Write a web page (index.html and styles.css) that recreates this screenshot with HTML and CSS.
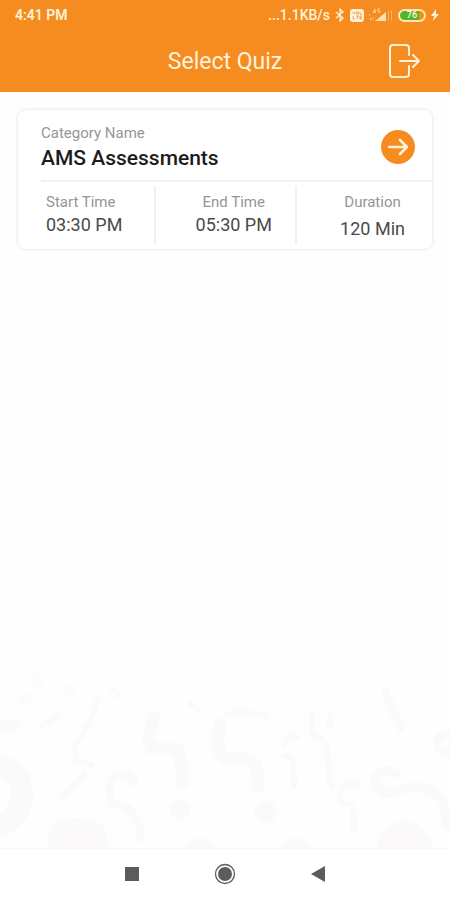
FILE: index.html
```html
<!DOCTYPE html>
<html lang="en">
<head>
    <meta charset="UTF-8">
    <meta name="viewport" content="width=device-width, initial-scale=1.0">
    <title>Select Quiz</title>
    <link rel="stylesheet" href="styles.css">
</head>
<body>
    <header class="header">
        <div class="status-bar">
            <span>4:41 PM</span>
            <div class="status-icons">
                <span class="network-speed">...1.1KB/s</span>
                <svg width="10" height="14" viewBox="0 0 10 14" fill="none" stroke="currentColor" stroke-width="1.3">
                    <path d="M1 4l7 6-3 3V1l3 3-7 6"/>
                </svg>
                <!-- VoLTE -->
                <svg width="14" height="13" viewBox="0 0 14 13">
                    <rect width="14" height="13" rx="3" fill="currentColor"/>
                    <path d="M3 3l1 2 1-2M6.500 3h2v2h-2zM10 3v2h2M3 7v3h2M6 7h3M7.500 7v3M12 7h-2v3h2M10 8.500h2" fill="none" stroke="#f68b1f" stroke-width="0.700"/>
                </svg>
                <svg width="24" height="14" viewBox="0 0 24 14" fill="currentColor">
                    <path d="M6 1L4 4h3M6 1v4M11 1H9v3h2V3" fill="none" stroke="currentColor" opacity="0.700"/>
                    <path d="M0 6h1v2H0zM1 10h2v2H1zM4 9h1v2H4z" opacity="0.500"/>
                    <path d="M6 13l11-9v9z" opacity="0.800"/>
                    <path d="M19 3h1v10h-1zM22 2h1v11h-1z" opacity="0.350"/>
                </svg>
                <span class="battery">76</span>
                <svg width="8" height="12" viewBox="0 0 8 12" fill="currentColor">
                    <path d="M5 0L0 7h3l-1 5 6-7H5z"/>
                </svg>
            </div>
        </div>
        <div class="app-bar">
            <h1>Select Quiz</h1>
            <button class="logout" aria-label="Log out">
                <svg width="32" height="34" viewBox="0 0 32 34" fill="none" stroke="currentColor" stroke-width="2" stroke-linecap="round" stroke-linejoin="round">
                    <path d="M20 11V4q0-3-3-3H4Q1 1 1 4v26q0 3 3 3h13q3 0 3-3v-8"/>
                    <path d="M11 17h18M24 11l6 6-6 6"/>
                </svg>
            </button>
        </div>
    </header>

    <main class="content">
        <section class="quiz-card">
            <div class="category">
                <div>
                    <p class="label">Category Name</p>
                    <h2>AMS Assessments</h2>
                </div>
                <button class="start" aria-label="Start quiz">
                    <svg width="20" height="18" viewBox="0 0 20 18" fill="none" stroke="currentColor" stroke-width="2.500" stroke-linecap="round" stroke-linejoin="round">
                        <path d="M1 9h17M12 2l7 7-7 7"/>
                    </svg>
                </button>
            </div>
            <div class="details">
                <div class="detail">
                    <p class="label">Start Time</p>
                    <p class="value">03:30 PM</p>
                </div>
                <div class="detail">
                    <p class="label">End Time</p>
                    <p class="value">05:30 PM</p>
                </div>
                <div class="detail duration">
                    <p class="label">Duration</p>
                    <p class="value">120 Min</p>
                </div>
            </div>
        </section>

        <!-- Faint question marks behind the bottom of the list -->
        <svg class="pattern" viewBox="0 0 450 208" fill="none" stroke="#fbfafa" stroke-linecap="round" stroke-linejoin="round" aria-hidden="true">
            <path d="M0 86h14" stroke-width="12"/>
            <path d="M0 126q20 4 22 26t-22 34" stroke-width="22"/>
            <path d="M98 60l-8 22-16 24 2 14 16 5M84 134l-12 12-12 12M42 86l16-10M112 50l8 6" stroke-width="6"/>
            <path d="M110 156c-6-26 22-26 24-14M112 164c16-2 28 14 29 34" stroke-width="8"/>
            <path d="M154 78q-8 20-2 30h22q8 0 8 36M220 84q-6 22 4 34h22q13 3 12 28" stroke-width="13"/>
            <path d="M226 75q18-8 40 2M190 64l10 8" stroke-width="6"/>
            <path d="M284 105q3-12 13-8M286 116q9-2 8 30M312 75v20q15 0 16 24t4 27M342 150q-7 14 7 14 6 4 5 18M344 144h14M330 76v10" stroke-width="6"/>
            <path d="M396 134c-20-12-28 10-14 18s24-10 42-4 22 18 22 36" stroke-width="9"/>
            <path d="M450 94c-14-2-18 14-6 18h6M386 52l6 18 9 18" stroke-width="8"/>
            <g fill="#fbf9f9" stroke="none">
                <circle cx="180" cy="170" r="10"/>
                <circle cx="265" cy="172" r="11"/>
                <circle cx="354" cy="187" r="5"/>
                <path d="M48 208q-2-24 10-26 20-8 38 0 12 4 12 26zM184 208q14-22 30 0zM280 208q15-20 34 0zM376 208q8-28 28-28t30 28z"/>
                <path d="M18 52h14v12H18zM32 34h10v14H32zM64 44h12v14H64z" opacity="0.300"/>
            </g>
        </svg>
    </main>

    <nav class="nav-bar">
        <button aria-label="Recent apps">
            <svg width="14" height="14" viewBox="0 0 14 14"><path d="M0 0h14v14H0z" fill="currentColor"/></svg>
        </button>
        <button aria-label="Home">
            <svg width="22" height="22" viewBox="0 0 22 22">
                <circle cx="11" cy="11" r="9.500" fill="none" stroke="currentColor" stroke-width="1.300"/>
                <circle cx="11" cy="11" r="7" fill="currentColor"/>
            </svg>
        </button>
        <button aria-label="Back">
            <svg width="14" height="16" viewBox="0 0 14 16"><path d="M0 8l14-8v16z" fill="currentColor"/></svg>
        </button>
    </nav>
</body>
</html>
```
FILE: styles.css
```css
* {
    margin: 0;
    padding: 0;
    box-sizing: border-box;
}

body {
    min-height: 100vh;
    display: flex;
    flex-direction: column;
    font-family: Roboto, Arial, sans-serif;
    background-color: #fefefe;
}

button {
    border: none;
    background: none;
    color: inherit;
    cursor: pointer;
}

svg {
    display: block;
}

/* Header */
.header {
    background-color: #f68b1f;
    color: #fff3dc;
}

.status-bar {
    display: flex;
    justify-content: space-between;
    align-items: center;
    height: 30px;
    padding: 0 11px 0 15px;
    font-size: 14px;
    font-weight: 600;
}

.status-icons {
    display: flex;
    align-items: center;
    gap: 5px;
}

.network-speed {
    font-weight: 500;
}

.battery {
    width: 28px;
    height: 13px;
    border: 2px solid #ffe6b0;
    border-radius: 7px;
    background: linear-gradient(90deg, #55b52a 80%, #f68b1f 80%);
    font-size: 9px;
    line-height: 9px;
    text-align: center;
}

.app-bar {
    display: grid;
    grid-template-columns: 1fr auto 1fr;
    align-items: center;
    height: 62px;
    padding: 0 29px;
}

.app-bar h1 {
    grid-column: 2;
    font-size: 23px;
    font-weight: 400;
}

.logout {
    justify-self: end;
}

/* Quiz list */
.content {
    flex: 1;
    display: flex;
    flex-direction: column;
    padding-top: 18px;
}

.quiz-card {
    margin: 0 18px;
    padding-left: 23px;
    border-radius: 8px;
    background-color: #fff;
    box-shadow: 0 0 3px 1px rgba(0, 0, 0, 0.08);
}

.category {
    display: flex;
    justify-content: space-between;
    align-items: center;
    height: 72px;
    padding: 3px 17px 0 0;
    border-bottom: 2px solid #f1f1f1;
}

.label {
    font-size: 15px;
    line-height: 20px;
    color: #969696;
}

.category h2 {
    padding-top: 2px;
    font-size: 21px;
    font-weight: 500;
    line-height: 26px;
    color: #1c1c1c;
}

.start {
    display: flex;
    justify-content: center;
    align-items: center;
    width: 34px;
    height: 34px;
    border-radius: 50%;
    background-color: #f68b1f;
    color: #fff3dc;
}

.details {
    display: grid;
    grid-template-columns: 29% 36% 35%;
    padding: 4px 0;
}

.detail {
    height: 59px;
    padding: 6px 0 0 16px;
    border-left: 2px solid #f1f1f1;
    text-align: center;
}

.detail:first-child {
    padding-left: 5px;
    border-left: none;
    text-align: left;
}

.value {
    font-size: 18px;
    line-height: 26px;
    color: #4a4a4a;
}

.duration .value {
    padding-top: 4px;
}

.pattern {
    width: 100%;
    margin-top: auto;
}

/* System navigation */
.nav-bar {
    display: flex;
    justify-content: center;
    height: 52px;
    padding-bottom: 2px;
    border-top: 1px solid #f7f7f7;
    background-color: #fff;
    color: #5c5c5c;
}

.nav-bar button {
    display: flex;
    justify-content: center;
    align-items: center;
    width: 93px;
}
```
